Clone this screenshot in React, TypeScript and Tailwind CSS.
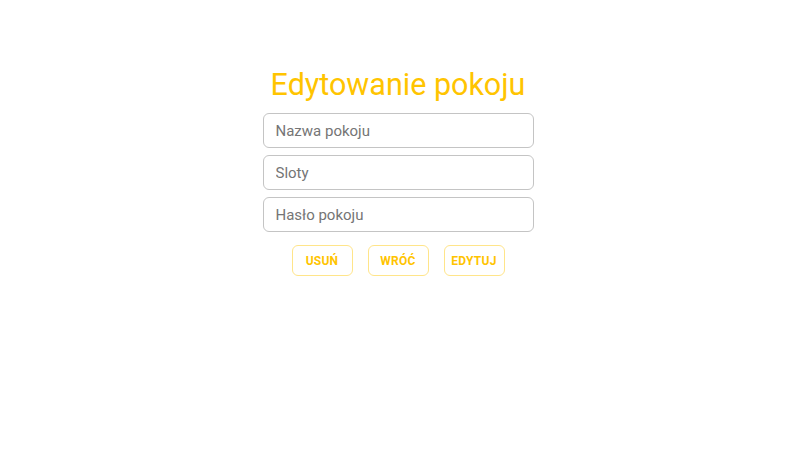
export default function App() {
  const fields = ['Nazwa pokoju', 'Sloty', 'Hasło pokoju'];
  const buttons = ['Usuń', 'Wróć', 'Edytuj'];

  return (
    <div className="min-h-screen bg-white pr-[14px] pt-[65px] font-['Roboto',sans-serif]">
      <div className="flex flex-col items-center">
        <h1 className="text-[30.5px] leading-[40px] font-normal text-[#ffc400]">
          Edytowanie pokoju
        </h1>
        <form className="mt-[8px] flex w-[271px] flex-col gap-[7px]">
          {fields.map((f) => (
            <input
              key={f}
              type="text"
              placeholder={f}
              className="h-[35px] w-full rounded-md border border-[#c4c4c4] px-3 text-[15px] text-[#333] placeholder:text-[#757575] outline-none"
            />
          ))}
        </form>
        <div className="mt-[13px] flex gap-[15px]">
          {buttons.map((b) => (
            <button
              key={b}
              className="h-[31px] w-[61px] rounded-md border border-[#ffe58a] text-[12px] font-bold uppercase tracking-[0.02em] text-[#ffc400]"
            >
              {b}
            </button>
          ))}
        </div>
      </div>
    </div>
  );
}
